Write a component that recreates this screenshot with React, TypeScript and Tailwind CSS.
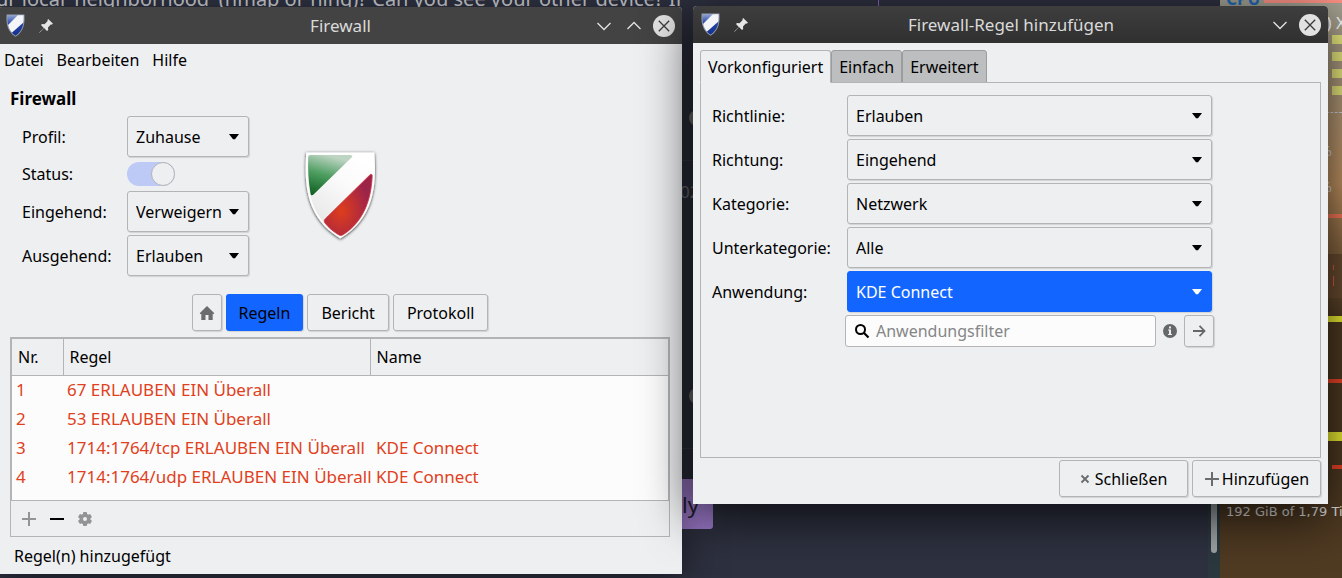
import { useId, useState } from 'react';
import type { ReactNode } from 'react';

const rules = [
  { nr: 1, rule: '67 ERLAUBEN EIN Überall', name: '' },
  { nr: 2, rule: '53 ERLAUBEN EIN Überall', name: '' },
  { nr: 3, rule: '1714:1764/tcp ERLAUBEN EIN Überall', name: 'KDE Connect' },
  { nr: 4, rule: '1714:1764/udp ERLAUBEN EIN Überall', name: 'KDE Connect' },
];

const presetFields = [
  { label: 'Richtlinie:', options: ['Erlauben', 'Verweigern'] },
  { label: 'Richtung:', options: ['Eingehend', 'Ausgehend', 'Beides'] },
  { label: 'Kategorie:', options: ['Netzwerk', 'Alle'] },
  { label: 'Unterkategorie:', options: ['Alle'] },
  { label: 'Anwendung:', options: ['KDE Connect'], active: true },
];

const presetTabs = ['Vorkonfiguriert', 'Einfach', 'Erweitert'];

const buttonClass =
  'flex items-center justify-center rounded-[3px] border border-[#b2b4b6] bg-[#eeeff1] shadow-[1px_1px_1px_rgba(0,0,0,0.12)]';

/* ---------- Icons ---------- */

function TitleShield() {
  return (
    <svg className="h-[23px] w-[19px]" viewBox="0 0 19 23" aria-hidden="true">
      <defs>
        <linearGradient id="blueShade" x1="0" y1="0" x2="0" y2="1">
          <stop offset="0" stopColor="#9fb0d8" />
          <stop offset="0.45" stopColor="#2344a4" />
          <stop offset="1" stopColor="#142e8c" />
        </linearGradient>
        <clipPath id="titleShieldClip">
          <path d="M1.5 1.2h16c.4 8-.4 15.500-8 20.600C1.900 16.700 1.100 9.200 1.500 1.200z" />
        </clipPath>
      </defs>
      <path d="M.6.4h17.800c.6 9-.5 16.800-8.900 22.300C1.100 17.200 0 9.400.6.4z" fill="#9aa0ab" />
      <g clipPath="url(#titleShieldClip)">
        <rect width="19" height="23" fill="url(#blueShade)" />
        <path d="M13 0h6v7L5.500 19 0 13z" fill="#f4f5f8" />
      </g>
    </svg>
  );
}

function PinIcon() {
  return (
    <svg className="h-[14px] w-[14px]" viewBox="0 0 14 14" aria-hidden="true">
      <path d="M9.200 0 14 4.800 12.600 5.700 12 5.300 9 8.600 9.200 11 8 12 5 9 .6 13.800.2 13.400 4.800 8.900 2 6 3 5 5.500 5.200 8.700 2 8.300 1.300z" fill="#e6e6e6" />
    </svg>
  );
}

function ChevronIcon({ up = false }: { up?: boolean }) {
  return (
    <svg className="h-[22px] w-[22px]" viewBox="0 0 22 22" fill="none" stroke="#e4e4e4" strokeWidth="1.300" aria-hidden="true">
      <path d={up ? 'M4.500 14 11 7.500 17.500 14' : 'M4.500 8 11 14.500 17.500 8'} />
    </svg>
  );
}

function CloseIcon() {
  return (
    <svg className="h-[22px] w-[22px]" viewBox="0 0 22 22" aria-hidden="true">
      <circle cx="11" cy="11" r="11" fill="#e2e2e2" />
      <path d="M5.800 5.800 16.200 16.200M16.200 5.800 5.800 16.200" stroke="#3b3b3b" strokeWidth="1.300" />
    </svg>
  );
}

function BigShield() {
  return (
    <svg className="h-[94px] w-[78px]" viewBox="0 0 78 94" aria-hidden="true">
      <defs>
        <linearGradient id="greenShade" x1="0.4" y1="0" x2="0.1" y2="1">
          <stop offset="0" stopColor="#bdd4c2" />
          <stop offset="0.45" stopColor="#4f9f63" />
          <stop offset="1" stopColor="#0c5d1e" />
        </linearGradient>
        <radialGradient id="redShade" cx="0.35" cy="0.6" r="0.6">
          <stop offset="0" stopColor="#de3d1c" />
          <stop offset="0.5" stopColor="#c03032" />
          <stop offset="1" stopColor="#9c2449" />
        </radialGradient>
        <linearGradient id="stripeShade" x1="0.8" y1="0" x2="0.2" y2="1">
          <stop offset="0" stopColor="#ffffff" />
          <stop offset="0.35" stopColor="#fbfbfb" />
          <stop offset="1" stopColor="#e3e3e3" />
        </linearGradient>
        <filter id="shieldShadow" x="-10%" y="-10%" width="120%" height="120%">
          <feDropShadow dx="0" dy="0.800" stdDeviation="1.400" floodColor="#000" floodOpacity="0.85" />
        </filter>
      </defs>
      <path
        d="M5.300 3.500h68c2.500 35-1 66-34 86C6.300 69.500 2.800 38.500 5.300 3.500z"
        fill="#fff"
        filter="url(#shieldShadow)"
      />
      <path d="M7 5h64.500c2 34-1 63-32.200 82C8 68 5 39 7 5z" fill="url(#stripeShade)" />
      <path d="M9.500 6H49c2.500 0 3 1.200 1.300 2.800L12.500 45.500c-1.500 1.400-2.700 1-3-1C7.300 32 6.800 19 7.200 8.300c.1-1.600.8-2.300 2.300-2.300z" fill="url(#greenShade)" />
      <path
        d="M68.800 26c1.500-1.400 2.500-.8 2.400 1.400C70 52 62 72.500 42.500 85.500c-2 1.200-3.400 1.200-5.400 0C31.500 82 27.500 78.500 24 74c-1.200-1.600-1-2.800.3-4.200z"
        fill="url(#redShade)"
        stroke="#d4353f"
        strokeWidth="0.800"
      />
    </svg>
  );
}

function HomeIcon() {
  return (
    <svg className="h-4 w-4" viewBox="0 0 16 16" aria-hidden="true">
      <path d="M8 1 0.700 8.300 1.500 9.200 2.300 8.700V15H6.500V10H9.500V15H13.700V8.700L14.500 9.200 15.300 8.300z" fill="#6b6c6d" />
    </svg>
  );
}

function PlusIcon({ color }: { color: string }) {
  return (
    <svg className="h-4 w-4 shrink-0" viewBox="0 0 16 16" aria-hidden="true">
      <path d="M7 1h2v6h6v2H9v6H7V9H1V7h6z" fill={color} />
    </svg>
  );
}

function MinusIcon() {
  return (
    <svg className="h-4 w-4" viewBox="0 0 16 16" aria-hidden="true">
      <path d="M1 7h14v2H1z" fill="#000" />
    </svg>
  );
}

function GearIcon() {
  return (
    <svg className="h-4 w-4" viewBox="0 0 16 16" aria-hidden="true">
      <g fill="#939494">
        <rect x="6" y="1" width="4" height="14" rx="0.800" />
        <rect x="6" y="1" width="4" height="14" rx="0.800" transform="rotate(60 8 8)" />
        <rect x="6" y="1" width="4" height="14" rx="0.800" transform="rotate(120 8 8)" />
        <circle cx="8" cy="8" r="5.500" />
      </g>
      <circle cx="8" cy="8" r="2" fill="#eeeff1" />
    </svg>
  );
}

function SearchIcon() {
  return (
    <svg className="h-4 w-4 shrink-0" viewBox="0 0 16 16" fill="none" stroke="#000" strokeWidth="2" aria-hidden="true">
      <circle cx="6.500" cy="6.500" r="4.500" />
      <path d="M9.800 9.800 14.500 14.500" strokeWidth="2.200" />
    </svg>
  );
}

function InfoIcon() {
  return (
    <svg className="mx-[7px] h-4 w-[14px] shrink-0" viewBox="0 0 14 16" aria-hidden="true">
      <circle cx="7" cy="8" r="7" fill="#666768" />
      <path d="M6 3.500h2v2H6zM5 6.500h3v4.500h1v1H5v-1h1V7.500H5z" fill="#eeeff1" />
    </svg>
  );
}

function ArrowIcon() {
  return (
    <svg className="h-4 w-4" viewBox="0 0 16 16" fill="none" stroke="#666768" strokeWidth="1.800" aria-hidden="true">
      <path d="M2 8h11M8.500 2.800 13.500 8 8.500 13.200" />
    </svg>
  );
}

/* ---------- Shared controls ---------- */

interface WindowProps {
  title: string;
  className: string;
  barClass: string;
  canMaximize?: boolean;
  children: ReactNode;
}

function Window({ title, className, barClass, canMaximize = false, children }: WindowProps) {
  return (
    <section className={`absolute flex flex-col rounded-t-[4px] bg-[#eeeff1] ${className}`}>
      <header className={`grid h-[37px] shrink-0 grid-cols-[1fr_auto_1fr] items-center rounded-t-[4px] pr-[7px] pl-2 ${barClass}`}>
        <div className="flex items-center gap-[14px]">
          <TitleShield />
          <PinIcon />
        </div>
        <h1 className="text-[17px] leading-6 text-[#dadada]">{title}</h1>
        <div className="flex items-center justify-end gap-2">
          <button aria-label="Minimieren"><ChevronIcon /></button>
          {canMaximize && <button aria-label="Maximieren"><ChevronIcon up /></button>}
          <button aria-label="Fenster schließen"><CloseIcon /></button>
        </div>
      </header>
      {children}
    </section>
  );
}

interface ComboProps {
  label: string;
  options: string[];
  active?: boolean;
}

function Combo({ label, options, active = false }: ComboProps) {
  const id = useId();
  return (
    <>
      <label htmlFor={id}>{label}</label>
      <div className="relative">
        <select
          id={id}
          className={`block h-[41px] w-full appearance-none rounded-[3px] border pl-2 shadow-[1px_1px_1px_rgba(0,0,0,0.12)] ${
            active ? 'border-[#1266ff] bg-[#1266ff] text-white' : 'border-[#b2b4b6] bg-[#eeeff1]'
          }`}
        >
          {options.map((option) => (
            <option key={option}>{option}</option>
          ))}
        </select>
        <svg
          className="pointer-events-none absolute top-[18px] right-[10px] h-[6px] w-[10px]"
          viewBox="0 0 10 6"
          aria-hidden="true"
        >
          <path d="M0 0h10L6 5.200H4z" fill={active ? '#fff' : '#000'} />
        </svg>
      </div>
    </>
  );
}

/* ---------- Main window ---------- */

function FirewallWindow() {
  return (
    <Window
      title="Firewall"
      canMaximize
      className="top-[7px] -left-0.5 h-[567px] w-[684px] shadow-[0_8px_40px_rgba(0,0,0,0.5)]"
      barClass="bg-[#434343]"
    >
      <nav className="flex h-8 items-center gap-[13px] pl-[6px]">
        <button>Datei</button>
        <button>Bearbeiten</button>
        <button>Hilfe</button>
      </nav>

      <div className="flex flex-1 flex-col px-3 pt-[11px]">
        <h2 className="text-[17px] leading-6 font-bold">Firewall</h2>

        <div className="mt-[5px] flex items-center">
          <div className="grid grid-cols-[105px_122px] items-center gap-y-[3px] pl-3">
            <Combo label="Profil:" options={['Zuhause', 'Büro', 'Öffentlich']} />
            <label htmlFor="status">Status:</label>
            <div className="flex h-7 items-center">
              <input
                id="status"
                type="checkbox"
                role="switch"
                defaultChecked
                className="h-6 w-12 appearance-none rounded-full bg-[#c8cacc] before:block before:size-6 before:rounded-full before:border before:border-[#b2b4b6] before:bg-[#eeeff1] checked:bg-[#bccaf5] checked:before:ml-6"
              />
            </div>
            <Combo label="Eingehend:" options={['Verweigern', 'Erlauben']} />
            <Combo label="Ausgehend:" options={['Erlauben', 'Verweigern']} />
          </div>
          <div className="ml-[52px]">
            <BigShield />
          </div>
        </div>

        <div className="mt-[18px] flex h-[37px] justify-center gap-1">
          <button className={`w-[30px] ${buttonClass}`} aria-label="Start">
            <HomeIcon />
          </button>
          <button className="rounded-[3px] bg-[#1266ff] px-[13px] shadow-[1px_1px_1px_rgba(0,0,0,0.12)]">Regeln</button>
          <button className={`px-[13px] ${buttonClass}`}>Bericht</button>
          <button className={`px-[13px] ${buttonClass}`}>Protokoll</button>
        </div>

        <div className="mt-[6px] border border-[#b2b4b6]">
          <div className="h-[163px] border border-[#b2b4b6] bg-[#fcfcfc]">
            <table className="w-full table-fixed border-collapse text-left">
              <colgroup>
                <col className="w-[51px]" />
                <col className="w-[307px]" />
                <col />
              </colgroup>
              <thead>
                <tr className="h-9 border-b border-[#b2b4b6] bg-[#eeeff1]">
                  <th className="border-r border-[#b2b4b6] pl-[6px] font-normal">Nr.</th>
                  <th className="border-r border-[#b2b4b6] pl-[6px] font-normal">Regel</th>
                  <th className="pl-[6px] font-normal">Name</th>
                </tr>
              </thead>
              <tbody className="text-[17px] leading-6 text-[#e04020]">
                {rules.map((item) => (
                  <tr key={item.nr} className="h-[29px]">
                    <td className="pl-1">{item.nr}</td>
                    <td className="pl-1 whitespace-nowrap">{item.rule}</td>
                    <td className="pl-[6px]">{item.name}</td>
                  </tr>
                ))}
              </tbody>
            </table>
          </div>
          <div className="flex h-[35px] items-center gap-3 pl-[10px]">
            <button aria-label="Regel hinzufügen"><PlusIcon color="#939494" /></button>
            <button aria-label="Regel entfernen"><MinusIcon /></button>
            <button aria-label="Regel bearbeiten"><GearIcon /></button>
          </div>
        </div>
        <p className="mt-[7px] pl-1">Regel(n) hinzugefügt</p>
      </div>
    </Window>
  );
}

/* ---------- Add rule dialog ---------- */

function AddRuleWindow() {
  const [tab, setTab] = useState(presetTabs[0]);

  return (
    <Window
      title="Firewall-Regel hinzufügen"
      className="top-[6px] left-[693px] h-[498px] w-[635px] shadow-[0_12px_50px_rgba(0,0,0,0.75)]"
      barClass="bg-linear-to-b from-[#3e3e3e] to-[#303030]"
    >
      <div className="flex flex-1 flex-col p-[7px]">
        <div className="-mb-px flex h-[33px]" role="tablist">
          {presetTabs.map((name) => (
            <button
              key={name}
              role="tab"
              aria-selected={tab === name}
              onClick={() => setTab(name)}
              className={`rounded-t-[3px] border px-[7px] ${
                tab === name
                  ? 'relative border-[#b2b4b6] border-b-[#eeeff1] bg-[#eeeff1]'
                  : 'border-[#9b9c9e] bg-[#bdbebf]'
              }`}
            >
              {name}
            </button>
          ))}
        </div>

        <div className="flex-1 border border-[#b2b4b6] py-3 pl-[11px]">
          <div className="grid grid-cols-[135px_365px] items-center gap-y-[3px]">
            {presetFields.map((field) => (
              <Combo key={field.label} label={field.label} options={field.options} active={field.active} />
            ))}
          </div>
          <div className="mt-[3px] ml-[133px] flex h-8 w-[369px] items-center">
            <label className="flex h-8 flex-1 items-center gap-[6px] rounded-[3px] border border-[#b2b4b6] bg-[#fcfcfc] pl-2">
              <SearchIcon />
              <input
                type="text"
                aria-label="Anwendungsfilter"
                placeholder="Anwendungsfilter"
                className="w-full min-w-0 bg-transparent outline-none placeholder:text-[#858687]"
              />
            </label>
            <InfoIcon />
            <button className={`h-8 w-[30px] ${buttonClass}`} aria-label="Übernehmen">
              <ArrowIcon />
            </button>
          </div>
        </div>

        <div className="mt-[2px] flex h-[37px] justify-end gap-1">
          <button className={`w-[129px] gap-[5px] ${buttonClass}`}>
            <svg className="h-[10px] w-[10px]" viewBox="0 0 10 10" stroke="#6b6c6d" strokeWidth="1.900" aria-hidden="true">
              <path d="M1.500 1.500 8.500 8.500M8.500 1.500 1.500 8.500" />
            </svg>
            Schließen
          </button>
          <button className={`w-[129px] gap-[2px] ${buttonClass}`}>
            <PlusIcon color="#6b6c6d" />
            Hinzufügen
          </button>
        </div>
      </div>
    </Window>
  );
}

/* ---------- Desktop behind the windows ---------- */

function ChatBackdrop() {
  return (
    <div className="relative flex-1 overflow-hidden bg-[#2e3140]">
      <p className="absolute -top-[13px] -left-1 text-[20px] leading-6 whitespace-nowrap text-[#c6c8cc]">
        ur local 'neighborhood' (nmap or nlng)? Can you see your other device? If
      </p>
      <div className="absolute top-0 left-[878px] h-2 w-px bg-[#8a63b5]" />
      <div className="absolute top-[110px] left-[689px] size-4 rounded-full bg-[#777]" />
      <div className="absolute top-[160px] left-[680px] h-px w-5 bg-[#3a3d49]" />
      <span className="absolute top-[180px] left-[680px] text-[17px] leading-6 text-[#777]">02</span>
      <div className="absolute top-[388px] left-[689px] size-4 rounded-full bg-[#777]" />
      <div className="absolute top-[448px] left-[680px] h-px w-5 bg-[#3a3d49]" />
      <button className="absolute top-[479px] left-[613px] flex h-[50px] w-[100px] items-center justify-end rounded-[3px] bg-[#a47fd4] pr-[14px] text-[22px] text-[#25222f]">
        Reply
      </button>
      <div className="absolute top-2 right-0 bottom-0 w-3 bg-[#2b383d]">
        <div className="mx-auto h-[545px] w-[6px] rounded-b-full bg-[#9da2a5]" />
      </div>
    </div>
  );
}

function MonitorBackdrop() {
  return (
    <div className="relative w-[122px] overflow-hidden bg-linear-to-b from-[#a3a294] from-0% via-[#c39462] via-32% to-[#4f3a22] to-55%">
      <span className="absolute -top-[13px] left-[6px] text-[17px] leading-6 font-bold text-[#2169b8]">CPU</span>
      <div className="absolute top-0 right-0 h-[3px] w-[78px] bg-[#ff9287]" />
      <span className="absolute top-[11px] -right-1 text-[17px] leading-6 text-white">) X</span>
      <div className="absolute top-[35px] right-0 flex flex-col gap-2">
        <div className="h-[9px] w-[10px] bg-[#f0f082]" />
        <div className="h-[9px] w-[10px] bg-[#f0f082]" />
        <div className="h-[9px] w-[10px] bg-[#f0f082]" />
        <div className="h-[9px] w-[10px] bg-[#f0f082]" />
      </div>
      <div className="absolute top-[112px] right-0 w-4 border-t border-dashed border-[#d9dde0]" />
      <span className="absolute top-[138px] right-[10px] text-[15px] leading-6 text-[#ddd]">%</span>
      <span className="absolute top-[174px] right-[10px] text-[15px] leading-6 text-[#ddd]">%</span>
      <div className="absolute top-[214px] right-0 h-1 w-4 bg-[#ff7a5c]" />
      <div className="absolute top-[254px] right-0 h-11 w-4 bg-[#6b4d31]" />
      <div className="absolute top-[265px] right-2 h-[5px] w-px bg-[#e25a44]" />
      <div className="absolute top-[276px] right-2 h-[10px] w-px bg-[#e25a44]" />
      <div className="absolute top-[316px] right-0 h-[6px] w-4 bg-[#f4f433]" />
      <div className="absolute top-[379px] right-0 h-1 w-4 bg-[#f5462a]" />
      <div className="absolute top-[432px] right-0 h-[9px] w-4 bg-[#f4f433]" />
      <div className="absolute top-[465px] right-0 h-1 w-[10px] bg-[#f5462a]" />
      <span className="absolute top-[500px] left-[6px] font-['DejaVu_Sans',sans-serif] text-[13px] leading-6 whitespace-nowrap text-[#e2e2e2]">
        192 GiB of 1,79 Ti
      </span>
    </div>
  );
}

export default function App() {
  return (
    <main className="relative flex h-screen w-full overflow-hidden font-['Noto_Sans',sans-serif] text-base leading-6 text-black">
      <ChatBackdrop />
      <MonitorBackdrop />
      <FirewallWindow />
      <AddRuleWindow />
    </main>
  );
}
